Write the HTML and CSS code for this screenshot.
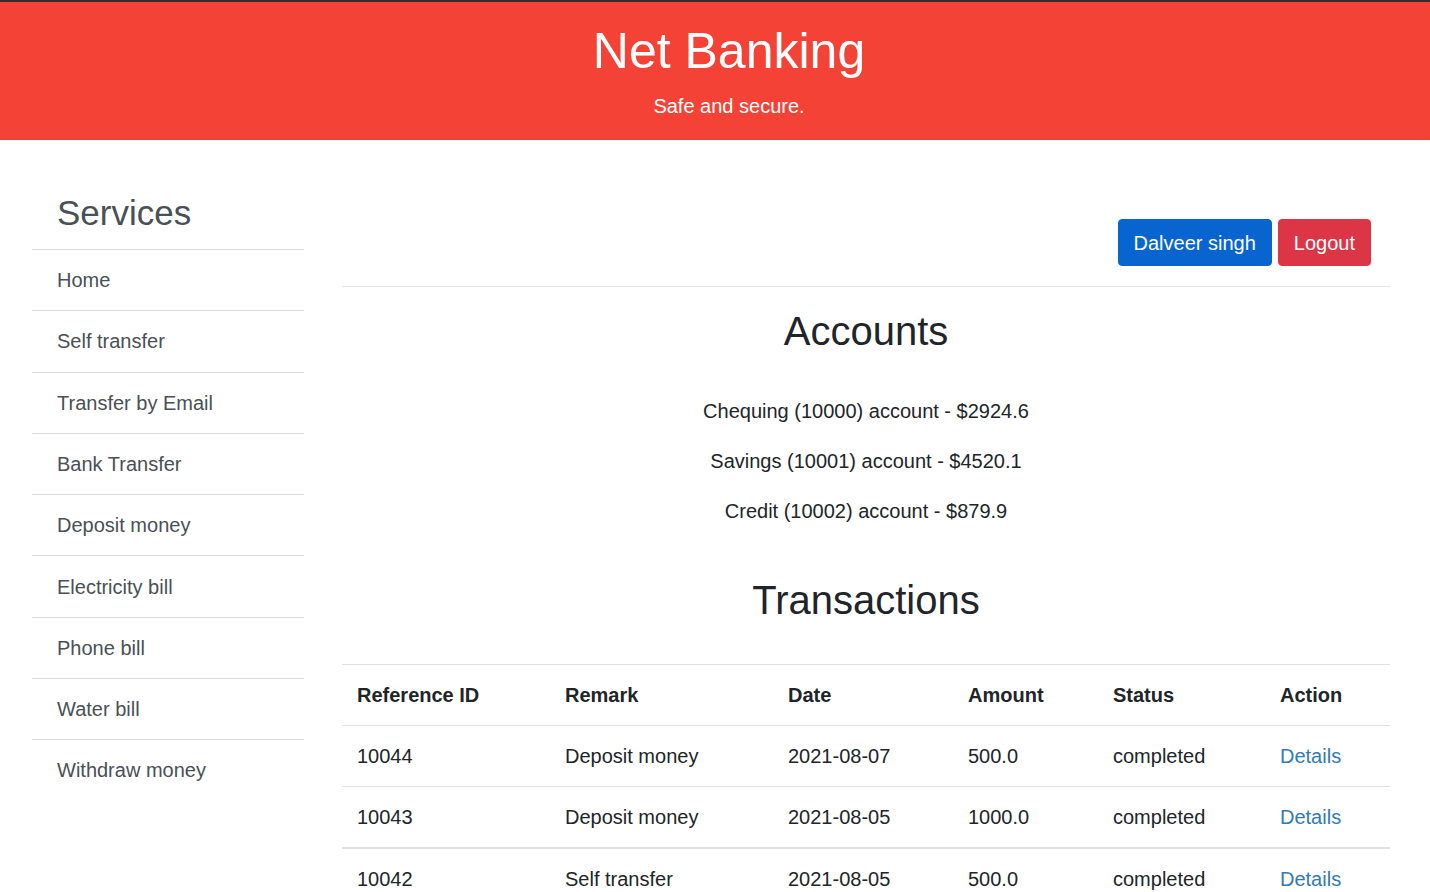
FILE: index.html
```html
<!DOCTYPE html>
<html lang="en">
<head>
    <meta charset="UTF-8">
    <meta name="viewport" content="width=device-width, initial-scale=1.0">
    <title>Net Banking</title>
    <link rel="stylesheet" href="styles.css">
</head>
<body>
    <header class="banner">
        <h1>Net Banking</h1>
        <p>Safe and secure.</p>
    </header>

    <div class="page">
        <aside class="sidebar">
            <h3>Services</h3>
            <ul class="services">
                <li><a href="#">Home</a></li>
                <li><a href="#">Self transfer</a></li>
                <li><a href="#">Transfer by Email</a></li>
                <li><a href="#">Bank Transfer</a></li>
                <li><a href="#">Deposit money</a></li>
                <li><a href="#">Electricity bill</a></li>
                <li><a href="#">Phone bill</a></li>
                <li><a href="#">Water bill</a></li>
                <li><a href="#">Withdraw money</a></li>
            </ul>
        </aside>

        <main class="main">
            <div class="user-bar">
                <button class="btn btn-user">Dalveer singh</button>
                <button class="btn btn-logout">Logout</button>
            </div>
            <hr>

            <h2>Accounts</h2>
            <div class="accounts">
                <p>Chequing (10000) account - $2924.6</p>
                <p>Savings (10001) account - $4520.1</p>
                <p>Credit (10002) account - $879.9</p>
            </div>

            <h2 class="tx-title">Transactions</h2>
            <table class="tx-table">
                <thead>
                    <tr>
                        <th class="col-ref">Reference ID</th>
                        <th class="col-remark">Remark</th>
                        <th class="col-date">Date</th>
                        <th class="col-amount">Amount</th>
                        <th class="col-status">Status</th>
                        <th class="col-action">Action</th>
                    </tr>
                </thead>
                <tbody>
                    <tr>
                        <td>10044</td>
                        <td>Deposit money</td>
                        <td>2021-08-07</td>
                        <td>500.0</td>
                        <td>completed</td>
                        <td><a href="#">Details</a></td>
                    </tr>
                    <tr>
                        <td>10043</td>
                        <td>Deposit money</td>
                        <td>2021-08-05</td>
                        <td>1000.0</td>
                        <td>completed</td>
                        <td><a href="#">Details</a></td>
                    </tr>
                </tbody>
                <tbody>
                    <tr>
                        <td>10042</td>
                        <td>Self transfer</td>
                        <td>2021-08-05</td>
                        <td>500.0</td>
                        <td>completed</td>
                        <td><a href="#">Details</a></td>
                    </tr>
                </tbody>
            </table>
        </main>
    </div>
</body>
</html>
```

FILE: styles.css
```css
* {
    box-sizing: border-box;
}
body {
    margin: 0;
    font-family: "Liberation Sans", Arial, sans-serif;
    font-size: 20px;
    line-height: 1.5;
    color: #212529;
    background: #fff;
}
.banner {
    background-color: #f44336;
    color: #fff;
    text-align: center;
    border-top: 2px solid #3a2a28;
    border-bottom: 2px solid #e8453a;
    padding: 19px 0 17px 28px;
}
.banner h1 {
    margin: 0;
    font-size: 50px;
    font-weight: 400;
    line-height: 1.2;
}
.banner p {
    margin: 10px 0 0;
}
.page {
    display: flex;
    gap: 38px;
    padding: 0 40px 0 32px;
}
.sidebar {
    width: 272px;
    flex-shrink: 0;
    padding-top: 52px;
}
.sidebar h3 {
    margin: 0 0 15px;
    padding-left: 25px;
    font-size: 35px;
    font-weight: 400;
    line-height: 1.2;
    color: #495057;
}
.services {
    list-style: none;
    margin: 0;
    padding: 0;
}
.services li {
    border-top: 1px solid #dcdcdc;
    padding: 15.15px 25px;
}
.services a {
    color: #495057;
    text-decoration: none;
}
.main {
    flex: 1;
    padding-top: 79px;
}
.user-bar {
    display: flex;
    justify-content: flex-end;
    gap: 6px;
    padding-right: 19px;
}
.btn {
    font-family: inherit;
    font-size: 20px;
    line-height: 1.5;
    padding: 7.5px 15px;
    border: 1px solid transparent;
    border-radius: 4px;
    color: #fff;
    cursor: pointer;
}
.btn-user {
    background: #0864cf;
    border-color: #0864cf;
}
.btn-logout {
    background: #dc3545;
    border-color: #dc3545;
}
hr {
    margin: 20px 0;
    border: 0;
    border-top: 1px solid #e6e6e6;
}
h2 {
    margin: 1px 0 0;
    font-size: 40px;
    font-weight: 400;
    line-height: 1.2;
    text-align: center;
}
.accounts {
    margin-top: 41px;
    text-align: center;
}
.accounts p {
    margin: 0 0 20px;
}
.tx-title {
    margin-top: 50px;
    margin-bottom: 40px;
}
.tx-table {
    width: 100%;
    border-collapse: collapse;
    table-layout: fixed;
}
.tx-table th,
.tx-table td {
    text-align: left;
    padding: 15px 15px;
    border-top: 1px solid #dee2e6;
    vertical-align: top;
}
.tx-table th {
    font-weight: 700;
}
.tx-table tbody + tbody {
    border-top: 2px solid #dee2e6;
}
.tx-table a {
    color: #337ab7;
    text-decoration: none;
}
.col-ref { width: 208px; }
.col-remark { width: 223px; }
.col-date { width: 180px; }
.col-amount { width: 145px; }
.col-status { width: 167px; }
.col-action { width: 125px; }
```
